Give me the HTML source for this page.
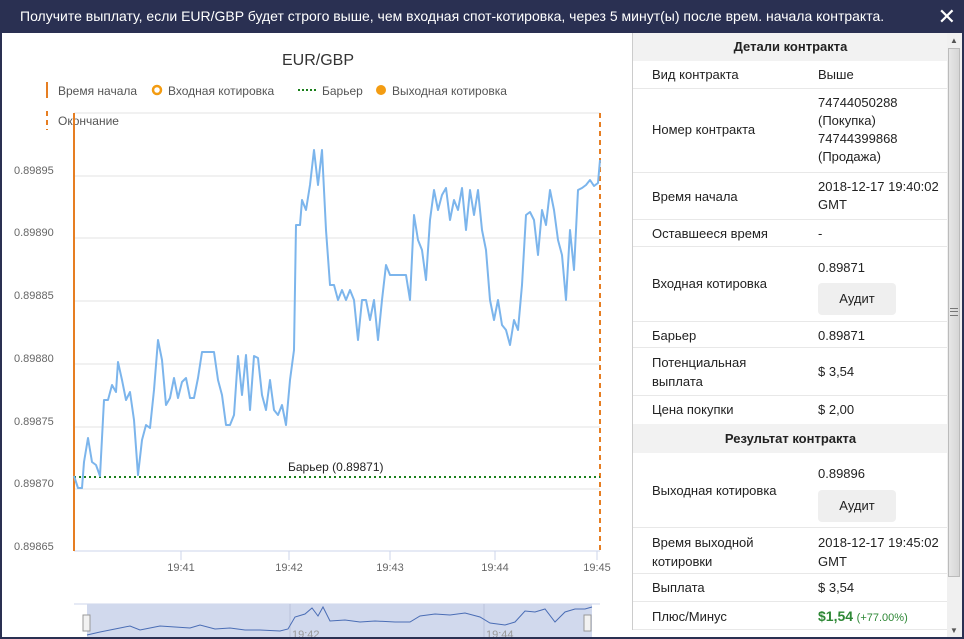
<!DOCTYPE html>
<html><head><meta charset="utf-8"><style>
body{margin:0;width:964px;height:639px;overflow:hidden;font-family:"Liberation Sans",sans-serif;background:#fff;position:relative}
.top{position:absolute;left:0;top:0;width:964px;height:33px;background:#2a3052;color:#fff;font-size:14px;line-height:33px}
.top span{position:absolute;left:20px}
.x{position:absolute;right:8px;top:0;font-size:22px}
.frame{position:absolute;left:0;top:33px;border-left:2px solid #2a3052;border-right:2px solid #2a3052;border-bottom:2px solid #2a3052;box-sizing:border-box;width:964px;height:606px}
.panel{position:absolute;left:632px;top:33px;width:315px;border-left:1px solid #ccc;font-size:13px;color:#222}
.row{border-bottom:1px solid #e8e8e8;position:relative;box-sizing:border-box}
.row .l{position:absolute;left:19px}
.row .r{position:absolute;left:185px}
.hd{background:#f2f2f2;font-weight:bold;text-align:center}
.btn{display:inline-block;width:78px;height:32px;background:#efefef;border-radius:4px;text-align:center;line-height:32px}
.sb{position:absolute;left:947px;top:33px;width:15px;height:604px;background:#f0f0f0}
.th{position:absolute;left:948px;top:48px;width:12px;height:529px;background:linear-gradient(90deg,#e6e6e6,#d6d6d6);border:1px solid #bbb;box-sizing:border-box}
</style></head><body>
<div class="top"><span>Получите выплату, если EUR/GBP будет строго выше, чем входная спот-котировка, через 5 минут(ы) после врем. начала контракта.</span><div class="x">✕</div></div>
<svg style="position:absolute;left:0;top:33px" width="632" height="606" viewBox="0 33 632 606" font-family="Liberation Sans" >
<text x="318" y="65" font-size="16" fill="#333" text-anchor="middle">EUR/GBP</text>
<g font-size="12" fill="#555">
<line x1="47" y1="82" x2="47" y2="98" stroke="#e67e22" stroke-width="2"/><text x="58" y="95">Время начала</text>
<circle cx="157" cy="90" r="4" fill="none" stroke="#f39c12" stroke-width="2.5"/><text x="168" y="95">Входная котировка</text>
<line x1="298" y1="90" x2="316" y2="90" stroke="#1a7f1a" stroke-width="2" stroke-dasharray="2,2"/><text x="322" y="95">Барьер</text>
<circle cx="381" cy="90" r="5" fill="#f39c12"/><text x="392" y="95">Выходная котировка</text>
<line x1="47" y1="111" x2="47" y2="130" stroke="#e67e22" stroke-width="2" stroke-dasharray="5,4"/><text x="58" y="125">Окончание</text>
</g>
<g stroke="#e3e3e3" stroke-width="1"><line x1="74" y1="113" x2="600" y2="113"/>
<line x1="74" y1="176" x2="600" y2="176"/><line x1="74" y1="238" x2="600" y2="238"/><line x1="74" y1="301" x2="600" y2="301"/><line x1="74" y1="364" x2="600" y2="364"/><line x1="74" y1="427" x2="600" y2="427"/><line x1="74" y1="489" x2="600" y2="489"/></g>
<line x1="74" y1="551" x2="600" y2="551" stroke="#ccd6eb"/>
<g stroke="#ccd6eb"><line x1="181" y1="551" x2="181" y2="560"/><line x1="289" y1="551" x2="289" y2="560"/><line x1="390" y1="551" x2="390" y2="560"/><line x1="495" y1="551" x2="495" y2="560"/><line x1="597" y1="551" x2="597" y2="560"/></g>
<g font-size="11" fill="#666"><text x="14" y="174">0.89895</text><text x="14" y="236">0.89890</text><text x="14" y="299">0.89885</text><text x="14" y="362">0.89880</text><text x="14" y="425">0.89875</text><text x="14" y="487">0.89870</text><text x="14" y="550">0.89865</text>
<g text-anchor="middle"><text x="181" y="571">19:41</text><text x="289" y="571">19:42</text><text x="390" y="571">19:43</text><text x="495" y="571">19:44</text><text x="597" y="571">19:45</text></g></g>
<line x1="74" y1="113" x2="74" y2="551" stroke="#e67e22" stroke-width="2"/>
<line x1="600" y1="113" x2="600" y2="551" stroke="#e67e22" stroke-width="2" stroke-dasharray="5,4"/>
<line x1="74" y1="477" x2="600" y2="477" stroke="#1a7f1a" stroke-width="2" stroke-dasharray="2,3"/>
<text x="288" y="471" font-size="12" fill="#222">Барьер (0.89871)</text>
<polyline fill="none" stroke="#7cb5ec" stroke-width="2" stroke-linejoin="round" points="74,476 78,488 82,488 84,462 88,438 92,462 96,465 100,476 104,400 108,400 112,385 116,392 118,362 122,380 126,400 130,392 134,420 138,475 142,440 146,425 150,428 154,390 158,340 162,360 166,405 170,398 174,378 178,398 182,382 186,378 190,398 194,398 198,378 202,352 206,352 210,352 214,352 218,380 222,395 226,425 230,425 234,415 238,356 242,395 246,355 250,410 254,356 258,358 262,395 266,410 270,380 274,410 278,415 282,405 286,425 290,380 294,350 296,225 300,225 302,200 306,210 310,185 314,150 318,185 322,150 326,230 330,285 334,285 338,300 342,290 346,300 350,290 354,300 358,340 362,300 366,300 370,320 374,300 378,340 382,300 386,265 390,275 394,275 398,275 402,275 406,275 410,300 414,215 418,240 422,250 426,280 430,220 434,190 438,210 442,195 446,188 450,220 454,200 458,210 462,188 466,230 470,190 474,215 478,190 482,230 486,250 490,300 494,320 498,300 502,325 506,330 510,345 514,320 518,330 522,285 526,215 530,212 534,220 538,255 542,210 546,225 550,190 554,210 558,240 562,255 566,300 570,230 574,270 578,190 582,188 586,185 590,180 594,186 598,183 600,160"/>
<line x1="74" y1="604" x2="600" y2="604" stroke="#ccd6eb"/>
<rect x="87" y="604" width="505" height="35" fill="#d1d9ed"/>
<line x1="290" y1="604" x2="290" y2="639" stroke="#bbc4dc"/><line x1="484" y1="604" x2="484" y2="639" stroke="#bbc4dc"/>
<polyline fill="none" stroke="#4a6db5" stroke-width="1" points="87,635 100,632 110,630 120,628 130,626 140,630 150,628 160,626 175,627 190,628 200,625 215,629 230,628 245,630 260,630 280,631 288,629 295,617 305,614 312,608 318,616 323,607 330,621 345,620 360,622 375,621 395,622 410,622 420,616 435,614 450,615 465,613 480,617 490,623 505,625 515,622 525,611 535,612 545,609 555,622 565,612 575,609 585,609 592,607"/>
<rect x="83" y="615" width="7" height="16" fill="#f2f2f2" stroke="#999"/>
<rect x="584" y="615" width="7" height="16" fill="#f2f2f2" stroke="#999"/>
<g font-size="11" fill="#999"><text x="292" y="638">19:42</text><text x="486" y="638">19:44</text></g>
</svg>
<div class="panel">
<div class="row hd" style="height:28px;line-height:28px;border:0">Детали контракта</div>
<div class="row" style="height:28px"><span class="l" style="top:6px">Вид контракта</span><span class="r" style="top:6px">Выше</span></div>
<div class="row" style="height:84px"><span class="l" style="top:33px">Номер контракта</span><span class="r" style="top:5px;line-height:18px">74744050288<br>(Покупка)<br>74744399868<br>(Продажа)</span></div>
<div class="row" style="height:47px"><span class="l" style="top:16px">Время начала</span><span class="r" style="top:5px;line-height:18px">2018-12-17 19:40:02<br>GMT</span></div>
<div class="row" style="height:27px"><span class="l" style="top:6px">Оставшееся время</span><span class="r" style="top:6px">-</span></div>
<div class="row" style="height:75px"><span class="l" style="top:29px">Входная котировка</span><span class="r" style="top:13px">0.89871</span><span class="r" style="top:36px"><span class="btn">Аудит</span></span></div>
<div class="row" style="height:26px"><span class="l" style="top:6px">Барьер</span><span class="r" style="top:6px">0.89871</span></div>
<div class="row" style="height:48px"><span class="l" style="top:5px;line-height:19px">Потенциальная<br>выплата</span><span class="r" style="top:16px">$ 3,54</span></div>
<div class="row" style="height:28px;border:0"><span class="l" style="top:6px">Цена покупки</span><span class="r" style="top:6px">$ 2,00</span></div>
<div class="row hd" style="height:29px;line-height:29px;border:0">Результат контракта</div>
<div class="row" style="height:75px"><span class="l" style="top:30px">Выходная котировка</span><span class="r" style="top:13px">0.89896</span><span class="r" style="top:37px"><span class="btn">Аудит</span></span></div>
<div class="row" style="height:46px"><span class="l" style="top:5px;line-height:19px">Время выходной<br>котировки</span><span class="r" style="top:5px;line-height:19px">2018-12-17 19:45:02<br>GMT</span></div>
<div class="row" style="height:28px"><span class="l" style="top:6px">Выплата</span><span class="r" style="top:6px">$ 3,54</span></div>
<div class="row" style="height:28px"><span class="l" style="top:7px">Плюс/Минус</span><span class="r" style="top:6px;color:#2e8836"><b style="font-size:14px">$1,54</b> <span style="font-size:11px">(+77.00%)</span></span></div>
</div>
<div class="sb"></div><div class="th"></div>
<div style="position:absolute;left:950px;top:36px;font-size:8px;color:#555">▲</div>
<div style="position:absolute;left:950px;top:626px;font-size:8px;color:#555">▼</div>
<div style="position:absolute;left:950px;top:308px;width:8px;height:6px;border-top:1px solid #777;border-bottom:1px solid #777"></div>
<div style="position:absolute;left:950px;top:311px;width:8px;height:1px;background:#777"></div>
<div class="frame"></div>
</body></html>
